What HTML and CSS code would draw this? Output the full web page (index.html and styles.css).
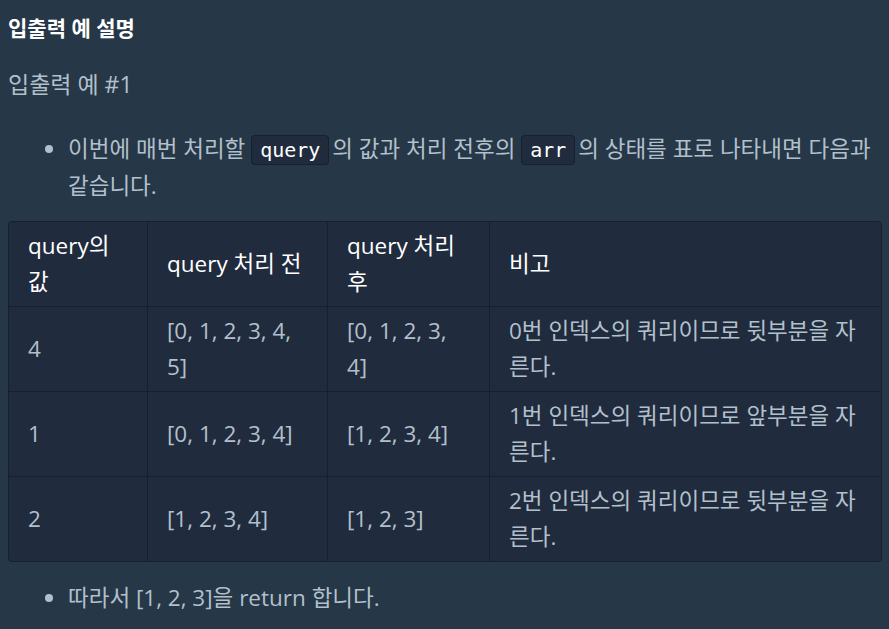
FILE: index.html
```html
<!DOCTYPE html>
<html lang="ko">
<head>
<meta charset="utf-8">
<link rel="stylesheet" href="styles.css">
</head>
<body>
<div class="markdown">
  <h5 class="title">입출력 예 설명</h5>
  <h6 class="subtitle">입출력 예 #1</h6>
  <ul class="list">
    <li>이번에 매번 처리할 <code>query</code> 의 값과 처리 전후의 <code>arr</code> 의 상태를 표로 나타내면 다음과 같습니다.</li>
  </ul>
  <table class="grid">
    <colgroup>
      <col class="c1"><col class="c2"><col class="c3"><col class="c4">
    </colgroup>
    <thead>
      <tr><th>query의 값</th><th>query 처리 전</th><th>query 처리 후</th><th>비고</th></tr>
    </thead>
    <tbody>
      <tr><td>4</td><td>[0, 1, 2, 3, 4, 5]</td><td>[0, 1, 2, 3, 4]</td><td>0번 인덱스의 쿼리이므로 뒷부분을 자른다.</td></tr>
      <tr><td>1</td><td>[0, 1, 2, 3, 4]</td><td>[1, 2, 3, 4]</td><td>1번 인덱스의 쿼리이므로 앞부분을 자른다.</td></tr>
      <tr><td>2</td><td>[1, 2, 3, 4]</td><td>[1, 2, 3]</td><td>2번 인덱스의 쿼리이므로 뒷부분을 자른다.</td></tr>
    </tbody>
  </table>
  <ul class="list last">
    <li>따라서 [1, 2, 3]을 return 합니다.</li>
  </ul>
</div>
</body>
</html>
```

FILE: styles.css
```css
html, body {
  margin: 0;
  padding: 0;
  background: #263747;
}
body {
  font-family: "Open Sans", "Noto Sans CJK KR", sans-serif;
  color: #b2c0cc;
  overflow: hidden;
}
.markdown {
  padding: 0 8px;
  font-size: 22.5px;
  line-height: 35px;
}
.title {
  margin: 0;
  padding-top: 14px;
  font-size: 21px;
  line-height: 28px;
  font-weight: 700;
  color: #ffffff;
}
.subtitle {
  margin: 27px 0 0 0;
  font-size: 23px;
  line-height: 30px;
  font-weight: 400;
  color: #b2c0cc;
}
.list {
  margin: 32px 0 0 0;
  padding-left: 60px;
}
.list.last {
  margin-top: 18px;
}
code {
  font-family: "DejaVu Sans Mono", monospace;
  font-size: 20px;
  background: #202b3d;
  border: 1px solid #172030;
  border-radius: 4px;
  padding: 2px 8px;
  margin-right: -3px;
  color: #ffffff;
}
.grid {
  margin-top: 18px;
  width: 874px;
  table-layout: fixed;
  border-collapse: separate;
  border-spacing: 0;
  border: 1px solid #172030;
  border-radius: 4px;
  background: #202b3d;
}
.c1 { width: 138px; }
.c2 { width: 180px; }
.c3 { width: 162px; }
.c4 { width: 392px; }
.grid th, .grid td {
  border-left: 1px solid #172030;
  border-top: 1px solid #172030;
  padding: 6px 19px;
  line-height: 36px;
  text-align: left;
  vertical-align: middle;
  font-size: 22.5px;
}
.grid th {
  border-top: none;
  font-weight: 400;
  color: #ffffff;
}
.grid th:first-child, .grid td:first-child {
  border-left: none;
}
```
